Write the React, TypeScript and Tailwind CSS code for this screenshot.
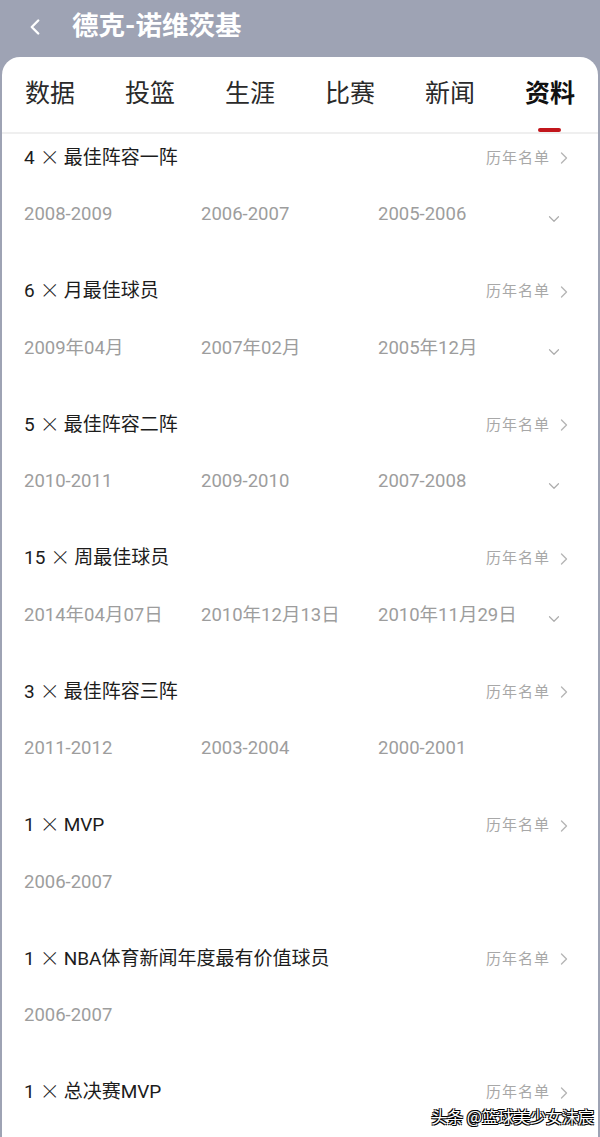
import { ChevronLeft, ChevronRight, ChevronDown } from "lucide-react";

const tabs = ["数据", "投篮", "生涯", "比赛", "新闻", "资料"];

const honors = [
  { count: "4", name: "最佳阵容一阵", years: ["2008-2009", "2006-2007", "2005-2006"], more: true },
  { count: "6", name: "月最佳球员", years: ["2009年04月", "2007年02月", "2005年12月"], more: true },
  { count: "5", name: "最佳阵容二阵", years: ["2010-2011", "2009-2010", "2007-2008"], more: true },
  { count: "15", name: "周最佳球员", years: ["2014年04月07日", "2010年12月13日", "2010年11月29日"], more: true },
  { count: "3", name: "最佳阵容三阵", years: ["2011-2012", "2003-2004", "2000-2001"], more: false },
  { count: "1", name: "MVP", years: ["2006-2007"], more: false },
  { count: "1", name: "NBA体育新闻年度最有价值球员", years: ["2006-2007"], more: false },
  { count: "1", name: "总决赛MVP", years: [], more: false },
];

export default function App() {
  return (
    <div
      className="relative w-[600px] h-[1137px] overflow-hidden bg-[#9ea3b4]"
      style={{ fontFamily: "Roboto, 'Noto Sans CJK SC', sans-serif" }}
    >
      {/* Header */}
      <div className="h-[57px] flex items-start pt-[6px] pl-[22px]">
        <ChevronLeft className="w-[26px] h-[26px] text-white mt-[8px]" strokeWidth={2.2} />
        <h1 className="ml-[24px] text-[26.5px] font-bold text-white leading-[40px]">德克-诺维茨基</h1>
      </div>

      {/* Panel */}
      <div className="ml-[2px] mr-[2px] h-[1080px] bg-white rounded-t-[18px] overflow-hidden">
        {/* Tabs */}
        <div className="h-[77px] border-b-2 border-[#efefef] flex justify-between px-[23px]">
          {tabs.map((t, i) => (
            <div key={t} className="relative flex flex-col items-center">
              <span
                className={`mt-[17px] text-[25px] leading-[40px] ${
                  i === tabs.length - 1 ? "font-bold text-[#111]" : "text-[#2a2a2a]"
                }`}
              >
                {t}
              </span>
              {i === tabs.length - 1 && (
                <div className="absolute top-[71px] w-[23px] h-[4px] bg-[#c2161c] rounded-sm" />
              )}
            </div>
          ))}
        </div>

        {/* Honors list */}
        <div>
          {honors.map((h, idx) => (
            <div key={idx} className="h-[133.5px] pt-[9px] pl-[22px] pr-[24px]">
              <div className="h-[30px] flex items-center justify-between">
                <span className="flex items-center text-[19px] text-[#1c1c1c]">
                  {h.count}
                  <span
                    className="ml-[5px] mr-[4px] mb-[3px] text-[20px] font-light leading-none"
                    style={{ fontFamily: "'Noto Sans CJK SC', sans-serif" }}
                  >
                    ×
                  </span>
                  {h.name}
                </span>
                <span className="flex items-center text-[15px] tracking-[1px] text-[#a8a8a8]">
                  历年名单
                  <ChevronRight className="w-[20px] h-[20px] ml-[4px] text-[#b5b5b5]" strokeWidth={1.6} />
                </span>
              </div>
              {h.years.length > 0 && (
                <div className="mt-[27px] h-[30px] flex items-center">
                  <div className="flex-1 min-w-0 grid grid-cols-[177px_177px_1fr]">
                    {h.years.map((y) => (
                      <span key={y} className="text-[18.5px] text-[#9d9d9d] whitespace-nowrap">
                        {y}
                      </span>
                    ))}
                  </div>
                  {h.more && (
                    <ChevronDown
                      className="shrink-0 w-[18px] h-[18px] mt-[7px] mr-[11px] text-[#adadad]"
                      strokeWidth={1.6}
                    />
                  )}
                </div>
              )}
            </div>
          ))}
        </div>
      </div>

      {/* Watermark */}
      <div
        className="absolute right-[6px] bottom-[9px] text-[16px] text-white"
        style={{
          fontFamily: "'Noto Sans CJK SC', sans-serif",
          textShadow:
            "1px 1px 0 #000, -1px -1px 0 #000, 1px -1px 0 #000, -1px 1px 0 #000",
        }}
      >
        头条 @篮球美少女沫宸
      </div>
    </div>
  );
}
